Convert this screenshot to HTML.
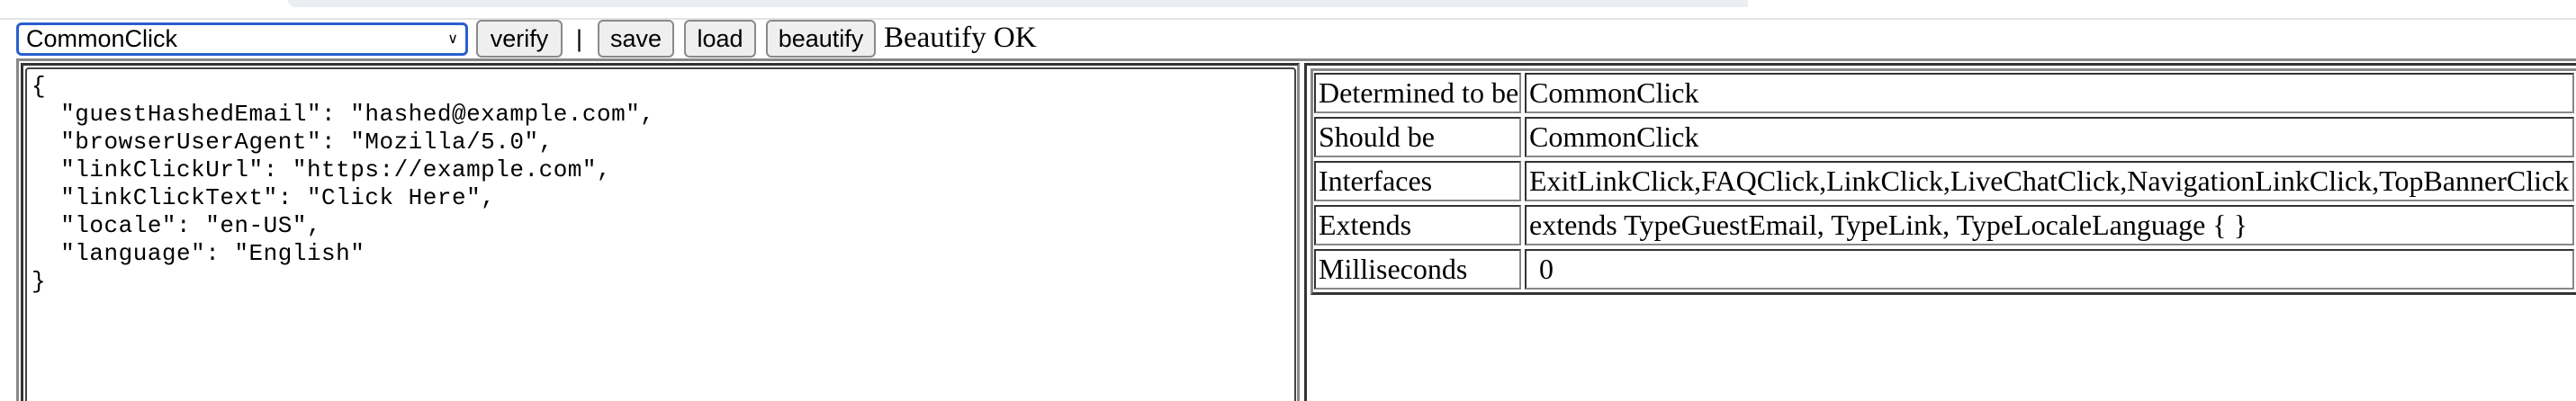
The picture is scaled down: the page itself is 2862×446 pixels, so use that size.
<!DOCTYPE html>
<html style="overflow:hidden"><head><meta charset="utf-8"><style>
*{box-sizing:border-box;margin:0;padding:0}
html,body{width:2862px;height:446px;overflow:hidden}
body{position:relative;background:#fff;font-family:"Liberation Serif",serif}
.a{position:absolute}
.btn{position:absolute;top:22px;height:42px;background:#efefef;border:2px solid #8a8a8a;border-radius:6px;font:27px "Liberation Sans",sans-serif;color:#000;text-align:center;line-height:38px}
.cell{position:absolute;border:2px solid;border-color:#333 #888 #888 #333;font-size:32px;line-height:40px;padding-left:3px;white-space:nowrap;overflow:hidden}
pre{font:26px/31px "Liberation Mono",monospace;letter-spacing:0.5px}
</style></head><body>
<div class="a" style="left:320px;top:0;width:1622px;height:8px;background:#eceef4;border-radius:0 0 0 14px"></div>
<div class="a" style="left:0;top:20px;width:2862px;height:2px;background:#e3e3e3"></div>
<div class="a" style="left:18px;top:25px;width:502px;height:37px;border:3px solid #2a5fcf;border-radius:6px;font:27px/31px 'Liberation Sans',sans-serif;padding-left:8px">CommonClick<span style="position:absolute;right:8px;top:0;font-size:16px">&#8744;</span></div>
<div class="btn" style="left:529px;width:96px">verify</div>
<div class="a" style="left:640px;top:24px;font:27px/38px 'Liberation Sans',sans-serif">|</div>
<div class="btn" style="left:664px;width:85px">save</div>
<div class="btn" style="left:760px;width:80px">load</div>
<div class="btn" style="left:851px;width:122px">beautify</div>
<div class="a" style="left:982px;top:20px;font-size:33px;line-height:44px">Beautify OK</div>
<div class="a" style="left:18px;top:65px;width:2844px;height:381px;border-top:3px solid #888;border-left:3px solid #888"></div>
<div class="a" style="left:23px;top:70px;width:1421px;height:376px;border:3px solid;border-bottom:0;border-color:#333 #888 #888 #333"></div>
<div class="a" style="left:28px;top:75px;width:1412px;height:371px;border:2px solid #444;border-bottom:0;border-radius:4px 4px 0 0"></div>
<pre class="a" style="left:35px;top:81px">{
  "guestHashedEmail": "hashed@example.com",
  "browserUserAgent": "Mozilla/5.0",
  "linkClickUrl": "https://example.com",
  "linkClickText": "Click Here",
  "locale": "en-US",
  "language": "English"
}</pre>
<div class="a" style="left:1449px;top:70px;width:1413px;height:376px;border:3px solid;border-bottom:0;border-right:0;border-color:#333 #888 #888 #333"></div>
<div class="a" style="left:1456px;top:76px;width:1406px;height:252px;border:3px solid;border-right:0;border-color:#888 #333 #333 #888"></div>
<div class="cell" style="left:1460px;top:81px;width:230px;height:45px">Determined to be</div>
<div class="cell" style="left:1694px;top:81px;width:1166px;height:45px">CommonClick</div>
<div class="cell" style="left:1460px;top:130px;width:230px;height:45px">Should be</div>
<div class="cell" style="left:1694px;top:130px;width:1166px;height:45px">CommonClick</div>
<div class="cell" style="left:1460px;top:179px;width:230px;height:45px">Interfaces</div>
<div class="cell" style="left:1694px;top:179px;width:1166px;height:45px">ExitLinkClick,FAQClick,LinkClick,LiveChatClick,NavigationLinkClick,TopBannerClick</div>
<div class="cell" style="left:1460px;top:228px;width:230px;height:45px">Extends</div>
<div class="cell" style="left:1694px;top:228px;width:1166px;height:45px">extends TypeGuestEmail, TypeLink, TypeLocaleLanguage { }</div>
<div class="cell" style="left:1460px;top:277px;width:230px;height:45px">Milliseconds</div>
<div class="cell" style="left:1694px;top:277px;width:1166px;height:45px;padding-left:14px">0</div>
</body></html>
